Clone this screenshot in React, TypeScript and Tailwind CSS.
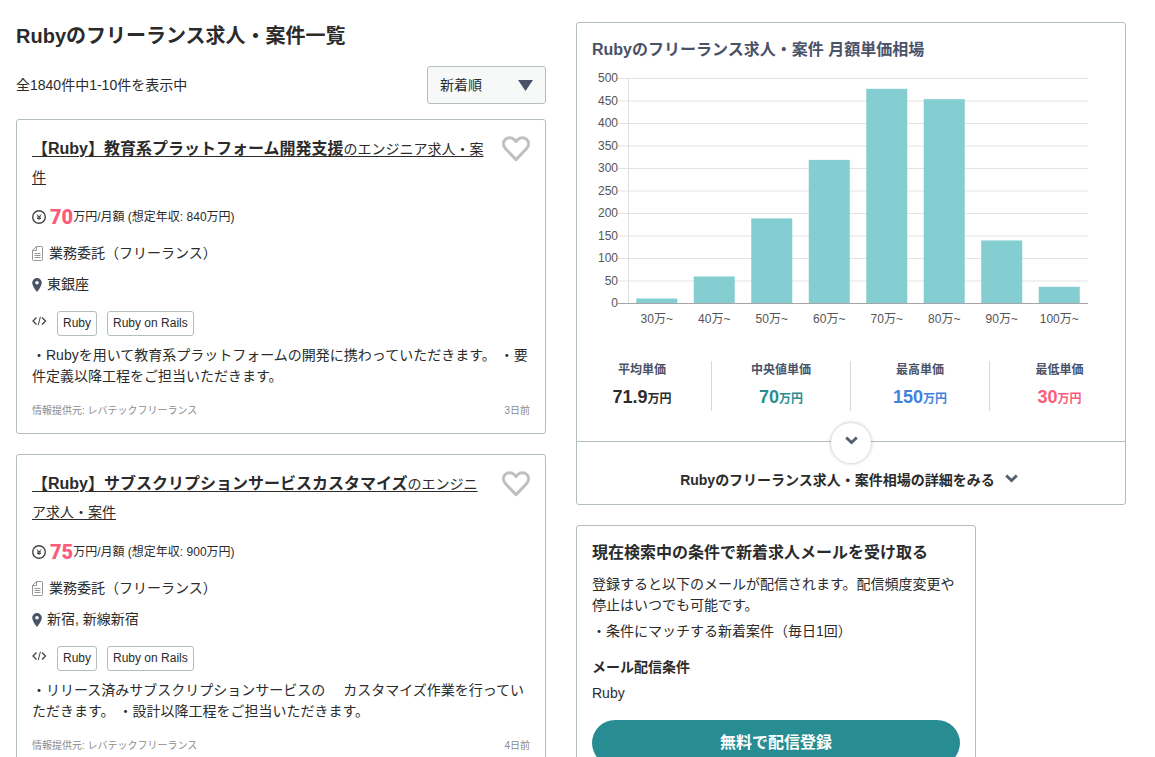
import { useState } from 'react'

interface Job {
  id: number
  title: string
  price: number
  yearly: number
  contract: string
  place: string
  skills: string[]
  description: string
  source: string
  posted: string
}

const jobs: Job[] = [
  {
    id: 1,
    title: '【Ruby】教育系プラットフォーム開発支援',
    price: 70,
    yearly: 840,
    contract: '業務委託（フリーランス）',
    place: '東銀座',
    skills: ['Ruby', 'Ruby on Rails'],
    description: '・Rubyを用いて教育系プラットフォームの開発に携わっていただきます。 ・要件定義以降工程をご担当いただきます。',
    source: 'レバテックフリーランス',
    posted: '3日前'
  },
  {
    id: 2,
    title: '【Ruby】サブスクリプションサービスカスタマイズ',
    price: 75,
    yearly: 900,
    contract: '業務委託（フリーランス）',
    place: '新宿, 新線新宿',
    skills: ['Ruby', 'Ruby on Rails'],
    description: '・リリース済みサブスクリプションサービスの　 カスタマイズ作業を行っていただきます。 ・設計以降工程をご担当いただきます。',
    source: 'レバテックフリーランス',
    posted: '4日前'
  }
]

const prices = [
  { label: '30万~', count: 10 },
  { label: '40万~', count: 59 },
  { label: '50万~', count: 188 },
  { label: '60万~', count: 318 },
  { label: '70万~', count: 476 },
  { label: '80万~', count: 453 },
  { label: '90万~', count: 139 },
  { label: '100万~', count: 36 }
]

const stats = [
  { label: '平均単価', value: '71.9', color: 'text-[#2b2b2b]' },
  { label: '中央値単価', value: '70', color: 'text-[#288d92]' },
  { label: '最高単価', value: '150', color: 'text-[#3f83dd]' },
  { label: '最低単価', value: '30', color: 'text-[#fa5c7c]' }
]

export default function App() {
  return (
    <div className="grid grid-cols-[53fr_55fr] items-start gap-[30px] bg-white pt-[22px] pr-[29px] pl-4 font-['Liberation_Sans','Noto_Sans_CJK_JP',sans-serif] text-sm leading-[21px] text-[#2b2b2b]">
      <main>
        <h1 className="text-xl leading-7 font-bold">Rubyのフリーランス求人・案件一覧</h1>
        <div className="mt-4 flex items-center justify-between">
          <p>全1840件中1-10件を表示中</p>
          <SortSelect />
        </div>
        <div className="mt-[15px] flex flex-col gap-5">
          {jobs.map((job) => (
            <JobCard key={job.id} job={job} />
          ))}
        </div>
      </main>

      <aside className="flex flex-col gap-5">
        <MarketCard />
        <MailCard />
      </aside>
    </div>
  )
}

function SortSelect() {
  const [sort, setSort] = useState('new')

  return (
    <div className="relative">
      <select
        aria-label="並び順"
        value={sort}
        onChange={(e) => setSort(e.target.value)}
        className="h-[38px] w-[119px] appearance-none rounded-[3px] border border-[#b2bfbd] bg-[#f7f9f8] pl-3 text-sm"
      >
        <option value="new">新着順</option>
        <option value="price">単価順</option>
      </select>
      <svg className="pointer-events-none absolute top-[14px] right-[13px] h-[11px] w-[15px]" viewBox="0 0 15 11">
        <path d="M0 0h15L7.5 11z" fill="#4a5268" />
      </svg>
    </div>
  )
}

function JobCard({ job }: { job: Job }) {
  const [liked, setLiked] = useState(false)

  return (
    <article className="rounded-[3px] border border-[#b2bfbd] p-[15px]">
      <div className="flex items-start gap-4">
        <h2 className="flex-1 leading-7">
          <a href="#" className="underline underline-offset-2">
            <span className="text-base leading-7 font-bold">{job.title}</span>のエンジニア求人・案件
          </a>
        </h2>
        <button type="button" aria-label="お気に入り" onClick={() => setLiked(!liked)}>
          <svg className="h-7 w-7" viewBox="0 -1 28 28">
            <path
              d="M14 23.6 3.6 12.8C.9 9.9.8 6 3.2 3.5c2.5-2.5 6.4-2.5 8.9 0L14 5.4l1.9-1.9c2.5-2.5 6.4-2.5 8.9 0 2.4 2.5 2.3 6.4-.4 9.3z"
              fill={liked ? '#fa5c7c' : 'none'}
              stroke="#bfbfbf"
              strokeWidth="3"
              strokeLinejoin="round"
            />
          </svg>
        </button>
      </div>

      <p className="mt-[14px] flex h-6 items-center text-xs">
        <YenIcon />
        <span className="ml-1 font-['Roboto',sans-serif] text-xl leading-6 font-black text-[#fa5c7c]">{job.price}</span>
        万円/月額 (想定年収: {job.yearly}万円)
      </p>
      <p className="mt-[14px] flex items-center gap-[6px]">
        <DocumentIcon />
        {job.contract}
      </p>
      <p className="mt-[10px] flex items-center gap-[5px]">
        <PinIcon />
        {job.place}
      </p>
      <div className="mt-4 flex items-start">
        <CodeIcon />
        <ul className="ml-[10px] flex flex-wrap gap-[10px]">
          {job.skills.map((skill) => (
            <li key={skill}>
              <a href="#" className="block rounded-[3px] border border-[#b2bfbd] px-[5px] text-xs leading-[23px]">
                {skill}
              </a>
            </li>
          ))}
        </ul>
      </div>
      <p className="mt-[9px]">{job.description}</p>
      <div className="mt-4 flex justify-between text-[10px] leading-[15px] text-[#8c8c8c]">
        <span>情報提供元: {job.source}</span>
        <span>{job.posted}</span>
      </div>
    </article>
  )
}

function MarketCard() {
  return (
    <section className="rounded-[3px] border border-[#b2bfbd]">
      <div className="px-[15px] pt-4">
        <h2 className="text-base leading-[22px] font-bold text-[#4a5268]">Rubyのフリーランス求人・案件 月額単価相場</h2>
        <PriceChart />
      </div>
      <dl className="-mx-1 mt-[31px] grid grid-cols-4 divide-x divide-[#d5d9dc] text-center">
        {stats.map((stat) => (
          <div key={stat.label} className="h-[50px] font-bold">
            <dt className="text-xs leading-[18px] text-[#4a5268]">{stat.label}</dt>
            <dd className={`mt-[6px] text-xs leading-6 ${stat.color}`}>
              <span className="text-lg leading-6">{stat.value}</span>万円
            </dd>
          </div>
        ))}
      </dl>
      <div className="relative mt-[30px] border-t border-[#b2bfbd]">
        <button
          type="button"
          aria-label="相場を開く"
          className="absolute -top-[19px] left-1/2 flex h-10 w-10 -translate-x-1/2 items-center justify-center rounded-full bg-white pb-[5px] shadow-[0_0_3px_1px_rgba(0,0,0,0.18)]"
        >
          <ChevronIcon />
        </button>
        <a href="#" className="flex items-center justify-center gap-[10px] pt-[28px] pr-1 pb-[13px] font-bold">
          Rubyのフリーランス求人・案件相場の詳細をみる
          <span className="pb-1">
            <ChevronIcon />
          </span>
        </a>
      </div>
    </section>
  )
}

function PriceChart() {
  const left = 36
  const right = 496
  const bottom = 237
  const scale = 0.45
  const slot = (right - left) / prices.length
  const ticks = [0, 50, 100, 150, 200, 250, 300, 350, 400, 450, 500]

  return (
    <svg className="mt-[5px] w-full" viewBox="0 0 518 264" role="img" aria-label="月額単価の分布">
      {ticks.map((tick) => {
        const y = bottom - tick * scale + 0.5
        return (
          <g key={tick}>
            <line x1={left - 10} x2={right} y1={y} y2={y} stroke="#e3e3e3" />
            <text x={left - 10} y={Math.floor(y) + 4} textAnchor="end" fontSize="12" fill="#555">
              {tick}
            </text>
          </g>
        )
      })}
      <line x1={left + 0.5} x2={left + 0.5} y1="12" y2={bottom} stroke="#dedede" />
      {prices.map((price, i) => {
        const center = left + slot * (i + 0.5)
        const height = price.count * scale
        return (
          <g key={price.label}>
            <rect x={center - 20.5} y={bottom - height} width="41" height={height} fill="#84ced1" />
            <text x={center} y="257" textAnchor="middle" fontSize="12" fill="#555">
              {price.label}
            </text>
          </g>
        )
      })}
      <line x1={left - 10} x2={right} y1={bottom + 0.5} y2={bottom + 0.5} stroke="#a6a6a6" />
    </svg>
  )
}

function MailCard() {
  return (
    <section className="w-[400px] rounded-[3px] border border-[#b2bfbd] p-[15px]">
      <h2 className="text-base leading-[23px] font-bold">現在検索中の条件で新着求人メールを受け取る</h2>
      <p className="mt-[10px]">登録すると以下のメールが配信されます。配信頻度変更や停止はいつでも可能です。</p>
      <p className="mt-[5px]">・条件にマッチする新着案件（毎日1回）</p>
      <h3 className="mt-[15px] font-bold">メール配信条件</h3>
      <p className="mt-[5px]">Ruby</p>
      <button type="button" className="mt-4 h-[46px] w-full rounded-full bg-[#288d92] text-base font-bold text-white">
        無料で配信登録
      </button>
    </section>
  )
}

function YenIcon() {
  return (
    <svg className="h-[14px] w-[14px] shrink-0" viewBox="0 0 14 14" fill="none" stroke="#444">
      <circle cx="7" cy="7" r="6.3" strokeWidth="1.4" />
      <path d="M5 4.5 7 7l2-2.5M7 7v3M5 7h4M5 8.5h4" strokeWidth="1" />
    </svg>
  )
}

function DocumentIcon() {
  return (
    <svg className="h-[15px] w-[11px] shrink-0" viewBox="0 0 11 15" fill="none" stroke="#7d7d7d">
      <path
        d="M4.5.5h5a1 1 0 0 1 1 1v12a1 1 0 0 1-1 1h-8a1 1 0 0 1-1-1v-9zM4.5.5v4h-4M2.5 7.5h6M2.5 9.5h6M2.5 11.5h6"
        strokeWidth="0.8"
      />
    </svg>
  )
}

function PinIcon() {
  return (
    <svg className="h-[14px] w-[10px] shrink-0" viewBox="0 0 10 14">
      <path
        d="M5 0a4.8 4.8 0 0 0-4.8 4.8C.2 8.2 5 14 5 14s4.8-5.8 4.8-9.2A4.8 4.8 0 0 0 5 0zm0 6.6a1.8 1.8 0 1 1 0-3.6 1.8 1.8 0 0 1 0 3.6z"
        fill="#4a5268"
      />
    </svg>
  )
}

function CodeIcon() {
  return (
    <svg className="mt-[5px] h-[10px] w-[15px] shrink-0" viewBox="0 0 15 10" fill="none" stroke="#444" strokeWidth="1.3">
      <path d="M4.5 1.5 1 5l3.5 3.5M10 1.5 13.5 5 10 8.5" />
      <path d="M8.4.8 6.2 9.2" strokeWidth="1" />
    </svg>
  )
}

function ChevronIcon() {
  return (
    <svg className="h-[9px] w-[13px] shrink-0" viewBox="0 0 13 9" fill="none" stroke="#56606c" strokeWidth="3">
      <path d="m1.2 1.5 5.3 5 5.3-5" />
    </svg>
  )
}
